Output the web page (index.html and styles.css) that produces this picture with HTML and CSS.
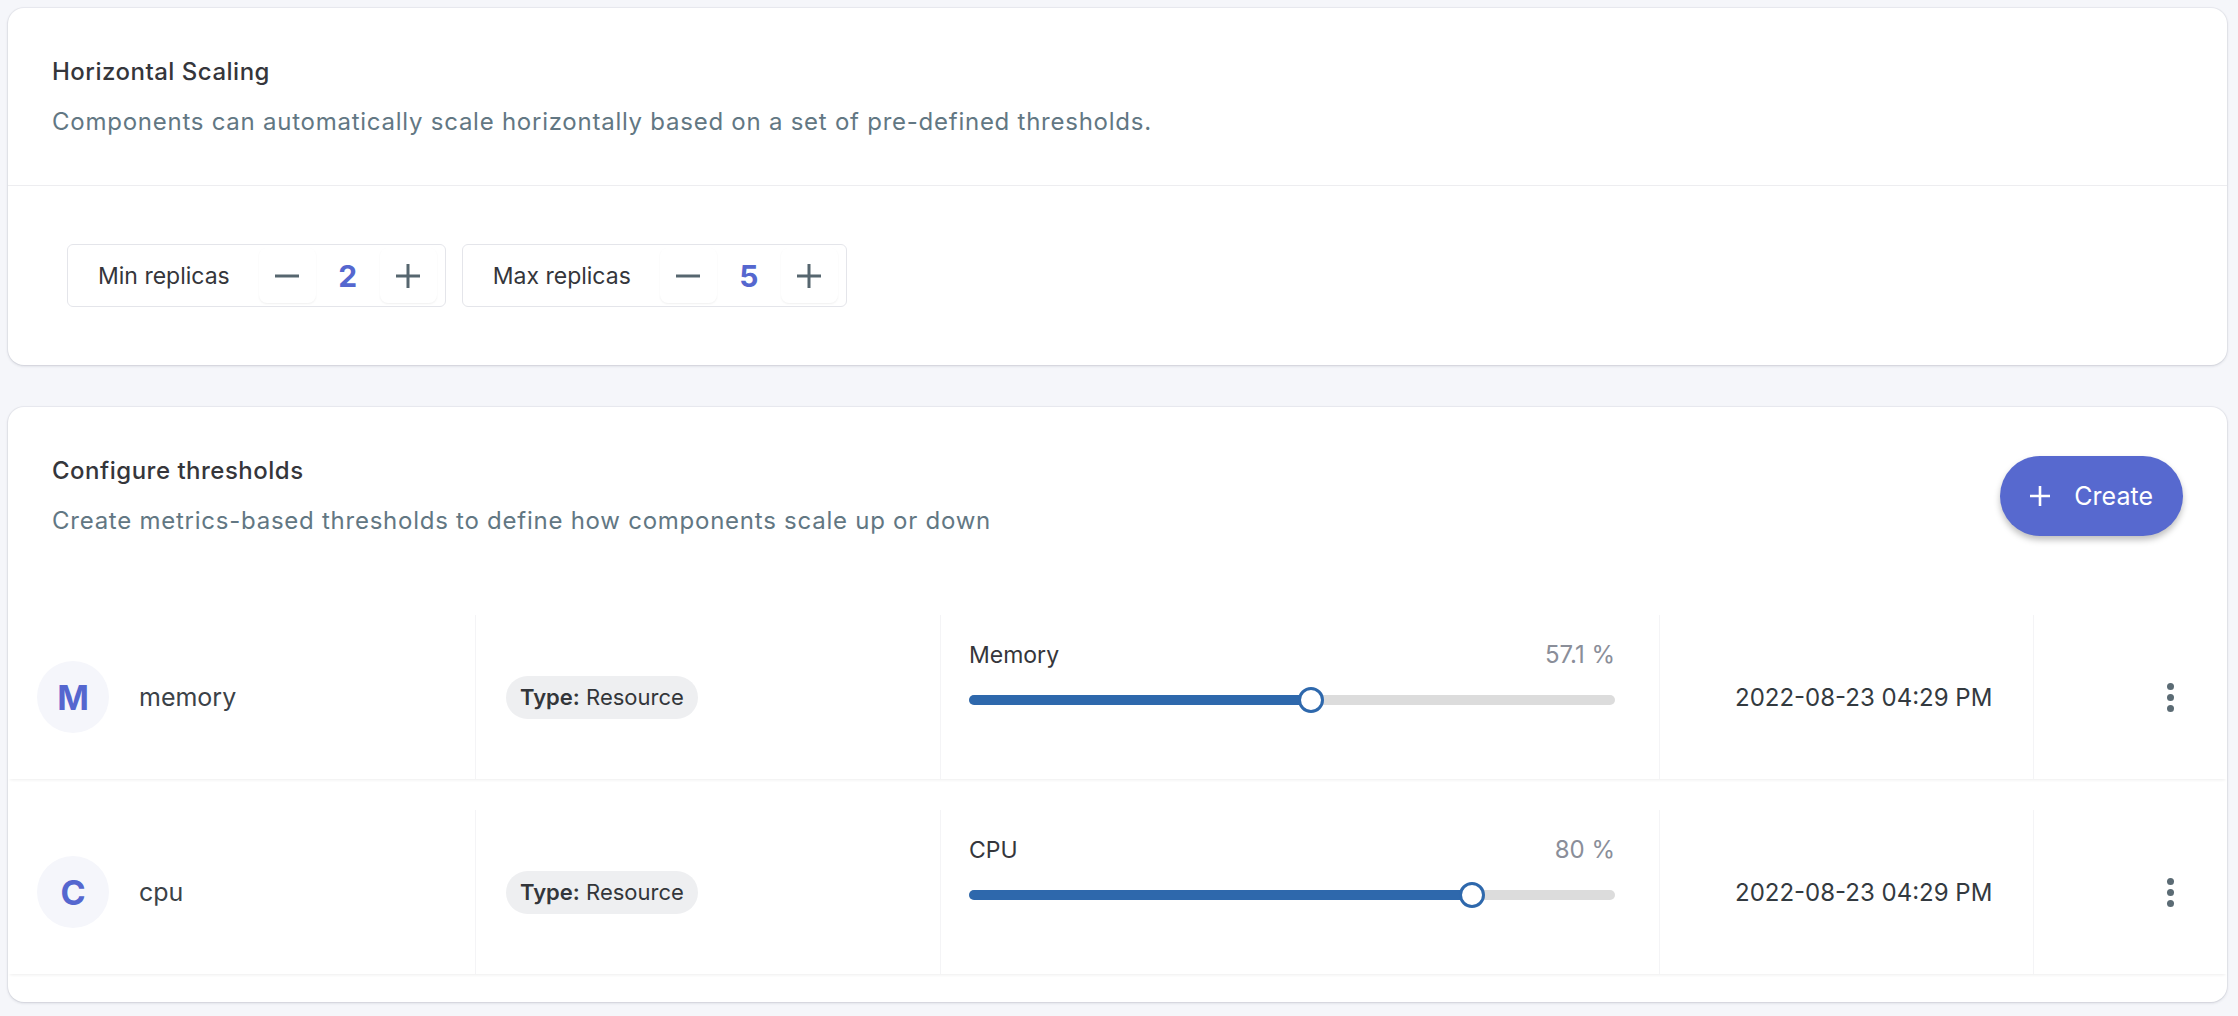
FILE: index.html
```html
<!DOCTYPE html>
<html lang="en">
<head>
<meta charset="utf-8">
<title>Horizontal Scaling</title>
<link rel="stylesheet" href="styles.css">
</head>
<body>
<div class="page">
  <section class="card">
    <div class="card-head bordered">
      <div class="head-text">
        <h2 class="title">Horizontal Scaling</h2>
        <p class="desc">Components can automatically scale horizontally based on a set of pre-defined thresholds.</p>
      </div>
    </div>
    <div class="steppers">
      <div class="stepper">
        <span class="stepper-label">Min replicas</span>
        <button class="step-btn" aria-label="decrease">
          <svg width="26" height="26" viewBox="0 0 26 26"><path d="M1 13h24" stroke="#56666f" stroke-width="3"/></svg>
        </button>
        <span class="step-value">2</span>
        <button class="step-btn" aria-label="increase">
          <svg width="26" height="26" viewBox="0 0 26 26"><path d="M1 13h24M13 1v24" stroke="#56666f" stroke-width="3"/></svg>
        </button>
      </div>
      <div class="stepper">
        <span class="stepper-label">Max replicas</span>
        <button class="step-btn" aria-label="decrease">
          <svg width="26" height="26" viewBox="0 0 26 26"><path d="M1 13h24" stroke="#56666f" stroke-width="3"/></svg>
        </button>
        <span class="step-value">5</span>
        <button class="step-btn" aria-label="increase">
          <svg width="26" height="26" viewBox="0 0 26 26"><path d="M1 13h24M13 1v24" stroke="#56666f" stroke-width="3"/></svg>
        </button>
      </div>
    </div>
  </section>

  <section class="card card-two">
    <div class="card-head">
      <div class="head-text">
        <h2 class="title">Configure thresholds</h2>
        <p class="desc">Create metrics-based thresholds to define how components scale up or down</p>
      </div>
      <button class="create-btn">
        <svg width="22" height="22" viewBox="0 0 22 22"><path d="M1 11h20M11 1v20" stroke="#fff" stroke-width="2.6"/></svg>
        <span>Create</span>
      </button>
    </div>

    <div class="rows">
      <div class="row">
        <div class="cell cell-name">
          <span class="avatar">M</span>
          <span class="name">memory</span>
        </div>
        <div class="cell cell-type">
          <span class="chip"><b>Type:</b> Resource</span>
        </div>
        <div class="cell cell-slider">
          <div class="slider-top">
            <span class="metric">Memory</span>
            <span class="pct">57.1 %</span>
          </div>
          <div class="track">
            <div class="fill" style="width: 52.9%"></div>
            <span class="thumb" style="left: 52.9%"></span>
          </div>
        </div>
        <div class="cell cell-date">2022-08-23 04:29 PM</div>
        <div class="cell cell-menu">
          <span class="dots"><i></i><i></i><i></i></span>
        </div>
      </div>

      <div class="row">
        <div class="cell cell-name">
          <span class="avatar">C</span>
          <span class="name">cpu</span>
        </div>
        <div class="cell cell-type">
          <span class="chip"><b>Type:</b> Resource</span>
        </div>
        <div class="cell cell-slider">
          <div class="slider-top">
            <span class="metric">CPU</span>
            <span class="pct">80 %</span>
          </div>
          <div class="track">
            <div class="fill" style="width: 77.9%"></div>
            <span class="thumb" style="left: 77.9%"></span>
          </div>
        </div>
        <div class="cell cell-date">2022-08-23 04:29 PM</div>
        <div class="cell cell-menu">
          <span class="dots"><i></i><i></i><i></i></span>
        </div>
      </div>
    </div>
  </section>
</div>
</body>
</html>
```

FILE: styles.css
```css
* { box-sizing: border-box; }

html, body {
  margin: 0;
  padding: 0;
  background: #f5f6fa;
  font-family: Inter, "Liberation Sans", sans-serif;
  color: #35363b;
}

.page {
  padding: 8px 11px 8px 8px;
  display: flex;
  flex-direction: column;
  gap: 42px;
}

.card {
  background: #fff;
  border-radius: 16px;
  box-shadow: 0 1px 3px rgba(30, 35, 60, 0.16), 0 0 0 1px rgba(30, 35, 60, 0.04);
  overflow: hidden;
}

.card-head {
  display: flex;
  align-items: center;
  justify-content: space-between;
  padding: 48px 44px 0 44px;
}

.card-head.bordered {
  padding-bottom: 47px;
  border-bottom: 1px solid #ededf0;
}

.title {
  margin: 0;
  font-size: 24px;
  line-height: 32px;
  font-weight: 500;
  letter-spacing: 0.5px;
  color: #35363b;
}

.desc {
  margin: 18px 0 0 0;
  font-size: 24px;
  line-height: 32px;
  font-weight: 400;
  letter-spacing: 0.75px;
  color: #627783;
}

.steppers {
  display: flex;
  gap: 16px;
  padding: 58px 59px 58px 59px;
}

.stepper {
  display: flex;
  align-items: center;
  height: 63px;
  padding: 0 8px 0 30px;
  border: 1px solid #e4e5ea;
  border-radius: 6px;
}

.stepper-label {
  font-size: 23px;
  color: #35363b;
  margin-right: 29px;
}

.step-btn {
  width: 57px;
  height: 55px;
  border: none;
  background: #fff;
  border-radius: 8px;
  box-shadow: 0 1px 2px rgba(0, 0, 0, 0.06);
  display: flex;
  align-items: center;
  justify-content: center;
  padding: 0;
}

.step-value {
  width: 64px;
  text-align: center;
  font-size: 30px;
  font-weight: 700;
  color: #5567cf;
}

.create-btn {
  display: flex;
  align-items: center;
  gap: 23px;
  height: 80px;
  padding: 0 30px 0 29px;
  border: none;
  border-radius: 40px;
  background: #5769cf;
  color: #fff;
  font-family: inherit;
  font-size: 25px;
  box-shadow: 0 4px 6px rgba(0, 0, 0, 0.25);
}

.rows {
  margin-top: 78px;
  padding-bottom: 28px;
  display: flex;
  flex-direction: column;
  gap: 31px;
}

.row {
  display: grid;
  grid-template-columns: 467px 465px 719px 374px 1fr;
  height: 164px;
  box-shadow: 0 3px 3px -2px rgba(0, 0, 0, 0.07);
}

.cell {
  display: flex;
  align-items: center;
  border-left: 1px solid #f4f4f6;
}

.cell-name {
  border-left: none;
  padding-left: 29px;
  gap: 30px;
}

.avatar {
  width: 72px;
  height: 72px;
  border-radius: 50%;
  background: #f5f6fb;
  color: #5567cf;
  font-size: 34px;
  font-weight: 700;
  display: flex;
  align-items: center;
  justify-content: center;
}

.name {
  font-size: 25px;
  color: #3b4248;
}

.cell-type {
  padding-left: 30px;
}

.chip {
  display: inline-flex;
  align-items: center;
  height: 43px;
  padding: 0 14px;
  border-radius: 22px;
  background: #eeeff1;
  font-size: 22px;
  color: #33363a;
  white-space: pre;
}

.chip b {
  font-weight: 600;
}

.cell-slider {
  flex-direction: column;
  align-items: stretch;
  justify-content: flex-start;
  padding: 24px 44px 0 28px;
}

.slider-top {
  display: flex;
  justify-content: space-between;
  font-size: 24px;
  line-height: 32px;
}

.metric {
  color: #35363b;
  font-size: 23px;
}

.pct {
  color: #8a8e99;
}

.track {
  position: relative;
  margin-top: 16px;
  height: 10px;
  border-radius: 5px;
  background: #dcdcdc;
  top: 8px;
}

.fill {
  height: 100%;
  border-radius: 5px;
  background: #2e68ac;
}

.thumb {
  position: absolute;
  top: 50%;
  width: 26px;
  height: 26px;
  margin: -13px 0 0 -13px;
  border-radius: 50%;
  background: #fff;
  border: 3px solid #2e68ac;
}

.cell-date {
  padding-left: 75px;
  font-size: 24px;
  color: #333a40;
}

.cell-menu {
  justify-content: flex-end;
  padding-right: 53px;
}

.dots {
  display: flex;
  flex-direction: column;
  gap: 4px;
}

.dots i {
  display: block;
  width: 7px;
  height: 7px;
  border-radius: 50%;
  background: #5b6b74;
}
```
